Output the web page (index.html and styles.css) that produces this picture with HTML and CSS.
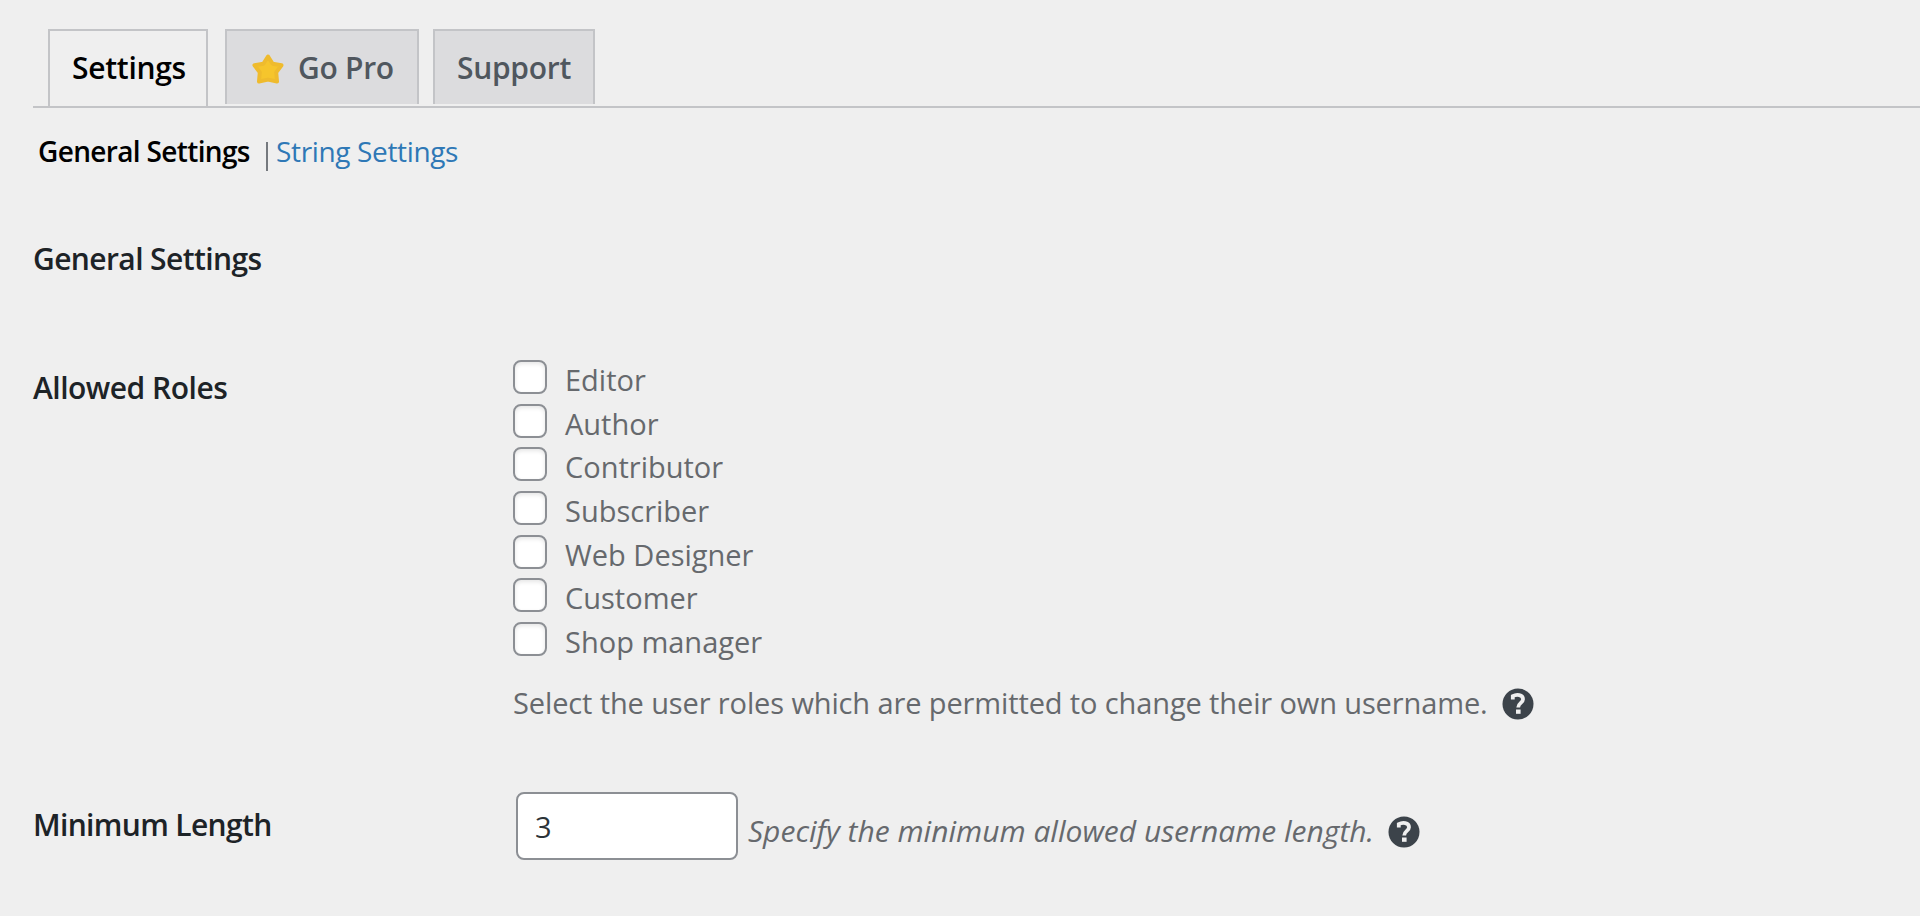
FILE: index.html
```
<!DOCTYPE html>
<html>
	<head>
		<meta charset="UTF-8">
		<title>Settings</title>
		<link rel="stylesheet" href="styles.css">
	</head>
	<body>
		<div id="wrap">
			<div class="tabs">
				<a class="tab active">Settings</a>
				<a class="tab pro">
					<svg class="star" viewBox="0 0 32 32">
						<path d="M16 3.5L20.6 10.8L29.5 12.2L24.2 19.4L25 28.5L16 26.6L7 28.5L7.8 19.4L2.5 12.2L11.4 10.8Z" fill="#f6c52c" stroke="#efbb2d" stroke-width="4" stroke-linejoin="round"/>
					</svg>
					<span>Go Pro</span>
				</a>
				<a class="tab support">Support</a>
			</div>
			<div class="sub">
				<a class="current">General Settings</a>
				<span class="line"></span>
				<a class="link">String Settings</a>
			</div>
			<h2 class="title">General Settings</h2>
			<div class="row">
				<div class="name roles-name">Allowed Roles</div>
				<div class="field">
					<label class="role"><input type="checkbox"/><span>Editor</span></label>
					<label class="role"><input type="checkbox"/><span>Author</span></label>
					<label class="role"><input type="checkbox"/><span>Contributor</span></label>
					<label class="role"><input type="checkbox"/><span>Subscriber</span></label>
					<label class="role"><input type="checkbox"/><span>Web Designer</span></label>
					<label class="role"><input type="checkbox"/><span>Customer</span></label>
					<label class="role"><input type="checkbox"/><span>Shop manager</span></label>
					<p class="desc">
						<span>Select the user roles which are permitted to change their own username.</span>
						<svg class="help" viewBox="0 0 32 32">
							<circle cx="16" cy="16" r="15.5" fill="#3c434a"/>
							<path d="M10.8 11.4V8.2C14.5 6 21 6.4 21 11.2C21 15 16.2 14.8 16.2 19.5" fill="none" stroke="#efefef" stroke-width="3.8"/>
							<rect x="14" y="21.5" width="4.6" height="4.3" fill="#efefef"/>
						</svg>
					</p>
				</div>
			</div>
			<div class="row length">
				<div class="name length-name">Minimum Length</div>
				<div class="field inline">
					<input class="num" type="text" value="3"/>
					<p class="hint">
						<em>Specify the minimum allowed username length.</em>
						<svg class="help" viewBox="0 0 32 32">
							<circle cx="16" cy="16" r="15.5" fill="#3c434a"/>
							<path d="M10.8 11.4V8.2C14.5 6 21 6.4 21 11.2C21 15 16.2 14.8 16.2 19.5" fill="none" stroke="#efefef" stroke-width="3.8"/>
							<rect x="14" y="21.5" width="4.6" height="4.3" fill="#efefef"/>
						</svg>
					</p>
				</div>
			</div>
		</div>
	</body>
</html>
```
FILE: styles.css
```
*{margin: 0;padding: 0;box-sizing: border-box;}
body{
	background: #efefef;
	color: #66696d;
	font-family: "Open Sans","Noto Sans",sans-serif;
	font-size: 30px;
	line-height: 40px;
	overflow: hidden;
}
#wrap{
	padding: 29px 0 0 33px;
}
.tabs{
	display: flex;
	align-items: flex-start;
	height: 79px;
	padding-left: 15px;
	border-bottom: 2px solid #c3c4c7;
}
.tab{
	display: flex;
	justify-content: center;
	height: 75px;
	padding-top: 17px;
	border: 2px solid #c3c4c7;
	border-bottom: 0;
	background: #dcdcde;
	color: #50575e;
	font-weight: 600;
	letter-spacing: -0.3px;
}
.active{
	width: 160px;
	height: 77px;
	padding-left: 2px;
	background: #efefef;
	color: #000;
}
.pro{
	width: 194px;
	margin-left: 17px;
}
.star{
	width: 32px;
	height: 32px;
	margin: 5px 14px 0 2px;
}
.support{
	width: 162px;
	margin-left: 14px;
}
.sub{
	display: flex;
	margin-top: 23px;
	padding-left: 5px;
	font-size: 28px;
}
.current{
	width: 227px;
	color: #000;
	font-weight: 600;
	letter-spacing: -0.65px;
}
.line{
	width: 2px;
	height: 29px;
	margin: 11px 8px 0 1px;
	background: #75797e;
}
.link{
	color: #2e78b6;
	letter-spacing: -0.35px;
}
.title{
	margin-top: 68px;
	color: #1d2327;
	font-size: 30px;
	font-weight: 600;
	letter-spacing: -0.6px;
}
.row{
	display: flex;
	margin-top: 80px;
}
.name{
	width: 480px;
	color: #1d2327;
	font-weight: 600;
	letter-spacing: -0.5px;
}
.roles-name{
	padding-top: 9px;
}
.role{
	display: flex;
	height: 43.67px;
	line-height: 42px;
	font-size: 29px;
}
.role input{
	appearance: none;
	width: 34px;
	height: 34px;
	margin: 1px 18px 0 0;
	border: 2px solid #8c8f94;
	border-radius: 8px;
	background: #fff;
	box-shadow: inset 0 2px 4px rgba(0,0,0,.1);
}
.desc{
	display: flex;
	margin-top: 18px;
	font-size: 29px;
	letter-spacing: -0.12px;
}
.help{
	width: 32px;
	height: 32px;
	margin: 5px 0 0 14px;
}
.length{
	margin-top: 69px;
}
.length-name{
	padding-top: 13px;
	letter-spacing: -0.65px;
}
.inline{
	display: flex;
	padding-left: 3px;
}
.num{
	width: 222px;
	height: 68px;
	padding: 2px 17px 0;
	border: 2px solid #8c8f94;
	border-radius: 8px;
	background: #fff;
	color: #2c3338;
	font-family: inherit;
	font-size: 29px;
}
.hint{
	display: flex;
	padding: 19px 0 0 10px;
}
```
